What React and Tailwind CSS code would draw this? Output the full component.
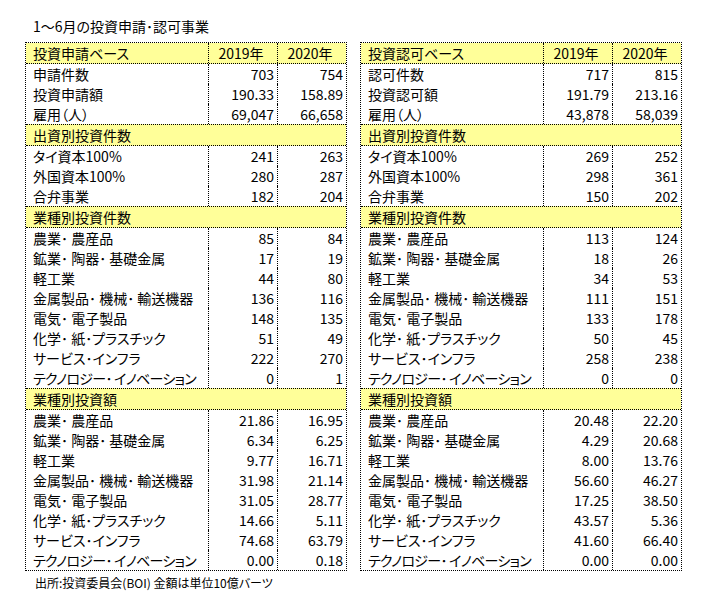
import React from 'react';

const left = {
  head: '投資申請ベース',
  top: [
    ['申請件数', '703', '754'],
    ['投資申請額', '190.33', '158.89'],
    ['雇用（人）', '69,047', '66,658'],
  ],
  capital: [
    ['タイ資本100%', '241', '263'],
    ['外国資本100%', '280', '287'],
    ['合弁事業', '182', '204'],
  ],
  count: ['85', '84', '17', '19', '44', '80', '136', '116', '148', '135', '51', '49', '222', '270', '0', '1'],
  amount: ['21.86', '16.95', '6.34', '6.25', '9.77', '16.71', '31.98', '21.14', '31.05', '28.77', '14.66', '5.11', '74.68', '63.79', '0.00', '0.18'],
};

const right = {
  head: '投資認可ベース',
  top: [
    ['認可件数', '717', '815'],
    ['投資認可額', '191.79', '213.16'],
    ['雇用（人）', '43,878', '58,039'],
  ],
  capital: [
    ['タイ資本100%', '269', '252'],
    ['外国資本100%', '298', '361'],
    ['合弁事業', '150', '202'],
  ],
  count: ['113', '124', '18', '26', '34', '53', '111', '151', '133', '178', '50', '45', '258', '238', '0', '0'],
  amount: ['20.48', '22.20', '4.29', '20.68', '8.00', '13.76', '56.60', '46.27', '17.25', '38.50', '43.57', '5.36', '41.60', '66.40', '0.00', '0.00'],
};

const sectors = [
  '農業･ 農産品',
  '鉱業･ 陶器･ 基礎金属',
  '軽工業',
  '金属製品･ 機械･ 輸送機器',
  '電気･ 電子製品',
  '化学･ 紙･プラスチック',
  'サービス･インフラ',
  'テクノロジー･ イノベーション',
];

// pair sector names with the flat value list
const withSectors = (vals) => sectors.map((name, i) => [name, vals[i * 2], vals[i * 2 + 1]]);

const Row = ({ cells }) => (
  <div className="grid grid-cols-[182px_69px_69px] h-[20px]">
    <div className={`flex items-center pl-[7px] whitespace-nowrap ${cells[0].startsWith('テクノロジー') ? 'tracking-[-0.7px]' : ''}`}>
      {cells[0]}
    </div>
    <div className="flex items-center justify-end pr-[3px] border-l border-dotted border-black">{cells[1]}</div>
    <div className="flex items-center justify-end pr-[3px] border-l border-dotted border-black">{cells[2]}</div>
  </div>
);

const Section = ({ title }) => (
  <div className="h-[22px] flex items-center pl-[7px] bg-[#ffff99] border-y border-dotted border-black">{title}</div>
);

const Table = ({ data }) => (
  <div className="w-[322px] border border-dotted border-black flex flex-col">
    <div className="grid grid-cols-[182px_69px_69px] h-[21px] bg-[#ffff99] border-b border-dotted border-black">
      <div className="flex items-center pl-[7px]">{data.head}</div>
      <div className="flex items-center justify-center pr-[4px] border-l border-dotted border-black">2019年</div>
      <div className="flex items-center justify-center pr-[4px] border-l border-dotted border-black">2020年</div>
    </div>
    {data.top.map((r) => <Row key={r[0]} cells={r} />)}
    <Section title="出資別投資件数" />
    {data.capital.map((r) => <Row key={r[0]} cells={r} />)}
    <Section title="業種別投資件数" />
    {withSectors(data.count).map((r) => <Row key={r[0]} cells={r} />)}
    <Section title="業種別投資額" />
    {withSectors(data.amount).map((r) => <Row key={r[0]} cells={r} />)}
  </div>
);

export default function App() {
  return (
    <div className="w-[705px] h-[609px] bg-white text-black pl-[25px] pt-[18px] leading-none text-[14px] font-['Noto_Sans_CJK_JP','Noto_Sans',sans-serif] [font-feature-settings:'palt']">
      <div className="h-[16px] flex items-center pl-[8px] mb-[8px]">1～6月の投資申請･認可事業</div>
      <div className="flex gap-[13px]">
        <Table data={left} />
        <Table data={right} />
      </div>
      <div className="mt-[5px] pl-[10px] text-[12px] h-[14px] flex items-center">出所:投資委員会(BOI) 金額は単位10億バーツ</div>
    </div>
  );
}
